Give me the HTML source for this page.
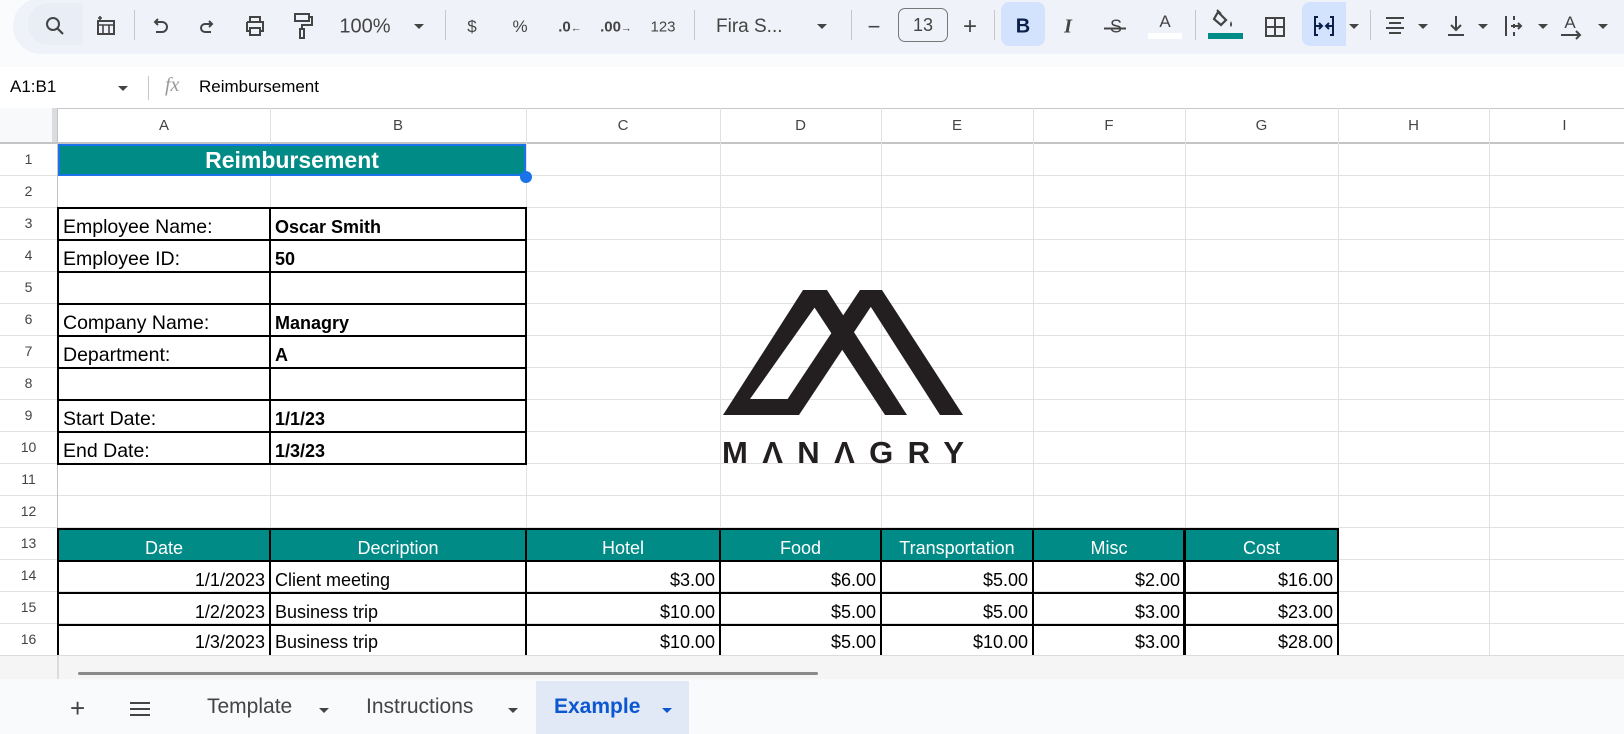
<!DOCTYPE html>
<html><head><meta charset="utf-8"><style>
*{margin:0;padding:0;box-sizing:border-box}
body{width:1624px;height:734px;overflow:hidden;background:#fff;font-family:"Liberation Sans",sans-serif;position:relative;color:#000}
.a{position:absolute}
.tb{position:absolute;left:13px;top:-2px;width:1640px;height:56px;background:#eff2f8;border-radius:28px}
.ti{position:absolute;top:27px;transform:translate(-50%,-50%);color:#444;font-size:16px;white-space:nowrap}
.sep{position:absolute;top:10px;width:1px;height:30px;background:#c7c7c7}
.dd{position:absolute;top:24px;width:0;height:0;border-left:5px solid transparent;border-right:5px solid transparent;border-top:5px solid #444;transform:translateX(-50%)}
.ch{position:absolute;top:108px;height:35px;line-height:35px;text-align:center;color:#444;font-size:15px}
.rh{position:absolute;left:0;width:57px;height:32px;line-height:30px;text-align:center;color:#444;font-size:14px}
.vl{position:absolute;width:1px;background:#e1e1e1}
.c{position:absolute;height:32px;display:flex;align-items:flex-end;padding:0 5px 2px;font-size:18px;line-height:22px;white-space:nowrap;overflow:hidden}
.lb{font-size:19.5px}
.r{justify-content:flex-end}
.ct{justify-content:center;color:#fff}
.b{font-weight:bold}
.hl{position:absolute;height:2px;background:#000}
.vb{position:absolute;width:2px;background:#000}
.tab{position:absolute;top:695px;font-size:21px;color:#444}
</style></head><body>
<div class="a" style="left:0;top:0;width:1624px;height:67px;background:#f9fbfd"></div>
<div class="tb"></div>
<div class="a" style="left:28px;top:3px;width:55px;height:42px;background:#e9eef6;border-radius:20px 0 0 20px"></div>
<svg class="a" style="left:44px;top:15px" width="22" height="22" viewBox="0 0 22 22"><circle cx="9" cy="9" r="6" fill="none" stroke="#444" stroke-width="2"/><path d="M13.5 13.5L19 19" stroke="#444" stroke-width="2.2"/></svg>
<svg class="a" style="left:95px;top:14px" width="22" height="24" viewBox="0 0 22 24"><rect x="3" y="7" width="16" height="13" fill="none" stroke="#444" stroke-width="2"/><path d="M3 11H19M8 11V20M14 11V20M5 2V6M3 4H7" stroke="#444" stroke-width="1.6"/></svg>
<div class="sep" style="left:134px"></div>
<svg class="a" style="left:150px;top:16px" width="20" height="20" viewBox="0 0 20 20"><path d="M5 6H12A5 5 0 0 1 12 16H6M8 3L5 6L8 9" fill="none" stroke="#444" stroke-width="2"/></svg>
<svg class="a" style="left:197px;top:16px" width="20" height="20" viewBox="0 0 20 20"><path d="M15 8H8A4 4 0 0 0 8 16H14M12 5L15 8L12 11" fill="none" stroke="#444" stroke-width="2"/></svg>
<svg class="a" style="left:243px;top:14px" width="24" height="24" viewBox="0 0 24 24"><path d="M7 8V3H17V8M4 8H20V17H17M7 17H4V8M7 14H17V21H7Z" fill="none" stroke="#444" stroke-width="2"/></svg>
<svg class="a" style="left:292px;top:12px" width="22" height="28" viewBox="0 0 22 28"><path d="M3 2H17V9H3ZM17 5H20V13H10V17M8 17H12V26H8Z" fill="none" stroke="#444" stroke-width="2"/></svg>
<div class="ti" style="left:365px;font-size:20px">100%</div>
<div class="dd" style="left:419px"></div>
<div class="sep" style="left:445px"></div>
<div class="ti" style="left:472px;font-size:17px">$</div>
<div class="ti" style="left:520px;font-size:17px">%</div>
<div class="ti" style="left:570px;font-size:15px;font-weight:bold">.0<span style="font-size:11px">←</span></div>
<div class="ti" style="left:616px;font-size:15px;font-weight:bold">.00<span style="font-size:11px">→</span></div>
<div class="ti" style="left:663px;font-size:15px">123</div>
<div class="sep" style="left:694px"></div>
<div class="ti" style="left:716px;transform:translateY(-50%);font-size:19px">Fira S...</div>
<div class="dd" style="left:822px"></div>
<div class="sep" style="left:851px"></div>
<div class="ti" style="left:874px;font-size:22px">−</div>
<div class="a" style="left:898px;top:8px;width:50px;height:34px;border:1px solid #777;border-radius:7px;text-align:center;line-height:32px;font-size:18px;color:#444">13</div>
<div class="ti" style="left:970px;font-size:24px">+</div>
<div class="sep" style="left:994px"></div>
<div class="a" style="left:1001px;top:2px;width:44px;height:44px;background:#d3e3fd;border-radius:8px"></div>
<div class="ti" style="left:1023px;font-size:20px;font-weight:bold;color:#0b1f4a">B</div>
<div class="ti" style="left:1068px;font-size:20px;font-style:italic;font-family:'Liberation Serif',serif;font-weight:bold">I</div>
<div class="ti" style="left:1116px;font-size:18px">S<span class="a" style="left:-6px;top:11px;width:22px;height:2px;background:#444"></span></div>
<div class="ti" style="left:1165px;top:22px;font-size:17px">A</div>
<div class="a" style="left:1148px;top:33px;width:34px;height:6px;background:#fff"></div>
<div class="sep" style="left:1195px"></div>
<svg class="a" style="left:1212px;top:8px" width="28" height="24" viewBox="0 0 28 24"><path d="M6 4L14 12L9 17L2 11Z" fill="none" stroke="#444" stroke-width="2.2"/><path d="M5 2L9 6" stroke="#444" stroke-width="2"/><path d="M19 13Q17 17 19 19Q21 17 19 13Z" fill="#444"/></svg>
<div class="a" style="left:1208px;top:33px;width:35px;height:6px;background:#008b87"></div>
<svg class="a" style="left:1263px;top:15px" width="24" height="24" viewBox="0 0 24 24"><path d="M3 3H21V21H3ZM12 3V21M3 12H21" fill="none" stroke="#444" stroke-width="2"/></svg>
<div class="a" style="left:1302px;top:2px;width:44px;height:44px;background:#d3e3fd;border-radius:8px 0 0 8px"></div>
<svg class="a" style="left:1312px;top:14px" width="24" height="24" viewBox="0 0 24 24"><path d="M6 3H3V21H6M18 3H21V21H18M4 12H10M7 9L10 12L7 15M20 12H14M17 9L14 12L17 15" fill="none" stroke="#0b1f4a" stroke-width="2"/></svg>
<div class="dd" style="left:1354px"></div>
<div class="sep" style="left:1370px"></div>
<svg class="a" style="left:1384px;top:15px" width="22" height="22" viewBox="0 0 22 22"><path d="M2 3H20M5 8H17M2 13H20M5 18H17" stroke="#444" stroke-width="2"/></svg>
<div class="dd" style="left:1423px"></div>
<svg class="a" style="left:1445px;top:14px" width="22" height="24" viewBox="0 0 22 24"><path d="M11 2V16M6 11L11 16L16 11M3 21H19" fill="none" stroke="#444" stroke-width="2"/></svg>
<div class="dd" style="left:1483px"></div>
<svg class="a" style="left:1503px;top:14px" width="22" height="24" viewBox="0 0 22 24"><path d="M3 2V22M11 2V6M11 10V14M11 18V22M8 12H18M15 9L18 12L15 15" fill="none" stroke="#444" stroke-width="2"/></svg>
<div class="dd" style="left:1543px"></div>
<div class="ti" style="left:1570px;top:23px;font-size:17px">A</div>
<svg class="a" style="left:1560px;top:30px" width="24" height="10" viewBox="0 0 24 10"><path d="M1 5H20M16 1L20 5L16 9" fill="none" stroke="#444" stroke-width="2"/></svg>
<div class="dd" style="left:1603px"></div>
<div class="a" style="left:10px;top:77px;font-size:17px;color:#000">A1:B1</div>
<div class="a" style="left:118px;top:86px;border-left:5px solid transparent;border-right:5px solid transparent;border-top:5px solid #444"></div>
<div class="a" style="left:148px;top:76px;width:1px;height:24px;background:#c7c7c7"></div>
<div class="a" style="left:165px;top:74px;font-size:20px;font-style:italic;font-family:'Liberation Serif',serif;color:#999">fx</div>
<div class="a" style="left:199px;top:77px;font-size:17px">Reimbursement</div>
<div class="a" style="left:0;top:108px;width:1624px;height:547px;overflow:hidden">
<div class="a" style="left:0;top:35px;width:1624px;height:520px;background:repeating-linear-gradient(to bottom,#e1e1e1 0,#e1e1e1 1px,transparent 1px,transparent 32px)"></div>
</div>
<div class="a" style="left:0;top:108px;width:1624px;height:1px;background:#c7c7c7"></div>
<div class="a" style="left:0;top:142px;width:1624px;height:2px;background:#c4c4c4"></div>
<div class="a" style="left:0;top:108px;width:52px;height:34px;background:#f8f9fa"></div>
<div class="a" style="left:52px;top:108px;width:5px;height:34px;background:#dadce0"></div>
<div class="a" style="left:57px;top:108px;width:1px;height:547px;background:#c4c4c4"></div>
<div class="vl" style="left:270px;top:108px;height:547px"></div>
<div class="vl" style="left:526px;top:108px;height:547px"></div>
<div class="vl" style="left:720px;top:108px;height:547px"></div>
<div class="vl" style="left:881px;top:108px;height:547px"></div>
<div class="vl" style="left:1033px;top:108px;height:547px"></div>
<div class="vl" style="left:1185px;top:108px;height:547px"></div>
<div class="vl" style="left:1338px;top:108px;height:547px"></div>
<div class="vl" style="left:1489px;top:108px;height:547px"></div>
<div class="ch" style="left:58px;width:212px">A</div>
<div class="ch" style="left:270px;width:256px">B</div>
<div class="ch" style="left:526px;width:194px">C</div>
<div class="ch" style="left:720px;width:161px">D</div>
<div class="ch" style="left:881px;width:152px">E</div>
<div class="ch" style="left:1033px;width:152px">F</div>
<div class="ch" style="left:1185px;width:153px">G</div>
<div class="ch" style="left:1338px;width:151px">H</div>
<div class="ch" style="left:1489px;width:151px">I</div>
<div class="rh" style="top:144px">1</div><div class="rh" style="top:176px">2</div><div class="rh" style="top:208px">3</div><div class="rh" style="top:240px">4</div><div class="rh" style="top:272px">5</div><div class="rh" style="top:304px">6</div><div class="rh" style="top:336px">7</div><div class="rh" style="top:368px">8</div><div class="rh" style="top:400px">9</div><div class="rh" style="top:432px">10</div><div class="rh" style="top:464px">11</div><div class="rh" style="top:496px">12</div><div class="rh" style="top:528px">13</div><div class="rh" style="top:560px">14</div><div class="rh" style="top:592px">15</div><div class="rh" style="top:624px">16</div>
<div class="a" style="left:58px;top:144px;width:468px;height:32px;background:#008b87;border:2px solid #1a73e8;color:#fff;font-weight:bold;font-size:23px;text-align:center;line-height:29px">Reimbursement</div>
<div class="a" style="left:520px;top:171px;width:12px;height:12px;border-radius:50%;background:#1a73e8"></div>
<div class="c lb" style="left:58px;top:208px;width:212px">Employee Name:</div><div class="c b" style="left:270px;top:208px;width:256px">Oscar Smith</div>
<div class="c lb" style="left:58px;top:240px;width:212px">Employee ID:</div><div class="c b" style="left:270px;top:240px;width:256px">50</div>
<div class="c lb" style="left:58px;top:304px;width:212px">Company Name:</div><div class="c b" style="left:270px;top:304px;width:256px">Managry</div>
<div class="c lb" style="left:58px;top:336px;width:212px">Department:</div><div class="c b" style="left:270px;top:336px;width:256px">A</div>
<div class="c lb" style="left:58px;top:400px;width:212px">Start Date:</div><div class="c b" style="left:270px;top:400px;width:256px">1/1/23</div>
<div class="c lb" style="left:58px;top:432px;width:212px">End Date:</div><div class="c b" style="left:270px;top:432px;width:256px">1/3/23</div>
<div class="hl" style="left:58px;top:207px;width:469px"></div><div class="hl" style="left:58px;top:239px;width:469px"></div><div class="hl" style="left:58px;top:271px;width:469px"></div><div class="hl" style="left:58px;top:303px;width:469px"></div><div class="hl" style="left:58px;top:335px;width:469px"></div><div class="hl" style="left:58px;top:367px;width:469px"></div><div class="hl" style="left:58px;top:399px;width:469px"></div><div class="hl" style="left:58px;top:431px;width:469px"></div><div class="hl" style="left:58px;top:463px;width:469px"></div>
<div class="vb" style="left:57px;top:207px;height:258px"></div><div class="vb" style="left:269px;top:207px;height:258px"></div><div class="vb" style="left:525px;top:207px;height:258px"></div>
<svg class="a" style="left:715px;top:285px" width="260" height="185" viewBox="715 285 260 185">
<g fill="#231f20">
<polygon points="723,415 803,290 827,290 750,399 790,399 797,415"/>
<polygon points="803,290 827,290 907,415 885,415"/>
<polygon points="860,290 882,290 799,415 777,415"/>
<polygon points="860,290 882,290 963,415 940,415"/>
</g>
<text x="722" y="463" font-family="Liberation Sans, sans-serif" font-size="31" font-weight="bold" fill="#231f20" textLength="242" lengthAdjust="spacing">MΛNΛGRY</text>
</svg>
<div class="a" style="left:58px;top:529px;width:1280px;height:32px;background:#008b87"></div>
<div class="c ct" style="left:58px;top:529px;width:212px">Date</div>
<div class="c ct" style="left:270px;top:529px;width:256px">Decription</div>
<div class="c ct" style="left:526px;top:529px;width:194px">Hotel</div>
<div class="c ct" style="left:720px;top:529px;width:161px">Food</div>
<div class="c ct" style="left:881px;top:529px;width:152px">Transportation</div>
<div class="c ct" style="left:1033px;top:529px;width:152px">Misc</div>
<div class="c ct" style="left:1185px;top:529px;width:153px">Cost</div>
<div class="c r" style="left:58px;top:561px;width:212px">1/1/2023</div><div class="c" style="left:270px;top:561px;width:256px">Client meeting</div><div class="c r" style="left:526px;top:561px;width:194px">$3.00</div><div class="c r" style="left:720px;top:561px;width:161px">$6.00</div><div class="c r" style="left:881px;top:561px;width:152px">$5.00</div><div class="c r" style="left:1033px;top:561px;width:152px">$2.00</div><div class="c r" style="left:1185px;top:561px;width:153px">$16.00</div>
<div class="c r" style="left:58px;top:593px;width:212px">1/2/2023</div><div class="c" style="left:270px;top:593px;width:256px">Business trip</div><div class="c r" style="left:526px;top:593px;width:194px">$10.00</div><div class="c r" style="left:720px;top:593px;width:161px">$5.00</div><div class="c r" style="left:881px;top:593px;width:152px">$5.00</div><div class="c r" style="left:1033px;top:593px;width:152px">$3.00</div><div class="c r" style="left:1185px;top:593px;width:153px">$23.00</div>
<div class="c r" style="left:58px;top:625px;width:212px;height:30px">1/3/2023</div><div class="c" style="left:270px;top:625px;width:256px;height:30px">Business trip</div><div class="c r" style="left:526px;top:625px;width:194px;height:30px">$10.00</div><div class="c r" style="left:720px;top:625px;width:161px;height:30px">$5.00</div><div class="c r" style="left:881px;top:625px;width:152px;height:30px">$10.00</div><div class="c r" style="left:1033px;top:625px;width:152px;height:30px">$3.00</div><div class="c r" style="left:1185px;top:625px;width:153px;height:30px">$28.00</div>
<div class="hl" style="left:58px;top:528px;width:1281px"></div><div class="hl" style="left:58px;top:560px;width:1281px"></div><div class="hl" style="left:58px;top:592px;width:1281px"></div><div class="hl" style="left:58px;top:624px;width:1281px"></div>
<div class="vb" style="left:57px;top:528px;height:127px"></div><div class="vb" style="left:269px;top:528px;height:127px"></div><div class="vb" style="left:525px;top:528px;height:127px"></div><div class="vb" style="left:719px;top:528px;height:127px"></div><div class="vb" style="left:880px;top:528px;height:127px"></div><div class="vb" style="left:1032px;top:528px;height:127px"></div><div class="vb" style="left:1183px;top:528px;height:127px;width:3px"></div><div class="vb" style="left:1337px;top:528px;height:127px"></div>
<div class="a" style="left:0;top:655px;width:1624px;height:24px;background:#f5f5f5;border-top:1px solid #dadce0"></div>
<div class="a" style="left:57px;top:655px;width:2px;height:24px;background:#dadce0"></div>
<div class="a" style="left:78px;top:672px;width:740px;height:3px;background:#8a8a8a;border-radius:2px"></div>
<div class="a" style="left:0;top:679px;width:1624px;height:55px;background:#f9fafb"></div>
<div class="a" style="left:536px;top:681px;width:153px;height:53px;background:#e1e9f7"></div>
<div class="a" style="left:70px;top:693px;font-size:26px;color:#444">+</div>
<svg class="a" style="left:129px;top:701px" width="22" height="16" viewBox="0 0 22 16"><path d="M1 2H21M1 8H21M1 14H21" stroke="#444" stroke-width="2"/></svg>
<div class="tab" style="left:207px">Template</div>
<div class="a" style="left:319px;top:708px;border-left:5px solid transparent;border-right:5px solid transparent;border-top:5px solid #444"></div>
<div class="tab" style="left:366px">Instructions</div>
<div class="a" style="left:508px;top:708px;border-left:5px solid transparent;border-right:5px solid transparent;border-top:5px solid #444"></div>
<div class="tab" style="left:554px;color:#0b57d0;font-weight:bold">Example</div>
<div class="a" style="left:662px;top:708px;border-left:5px solid transparent;border-right:5px solid transparent;border-top:5px solid #0b57d0"></div>
</body></html>
